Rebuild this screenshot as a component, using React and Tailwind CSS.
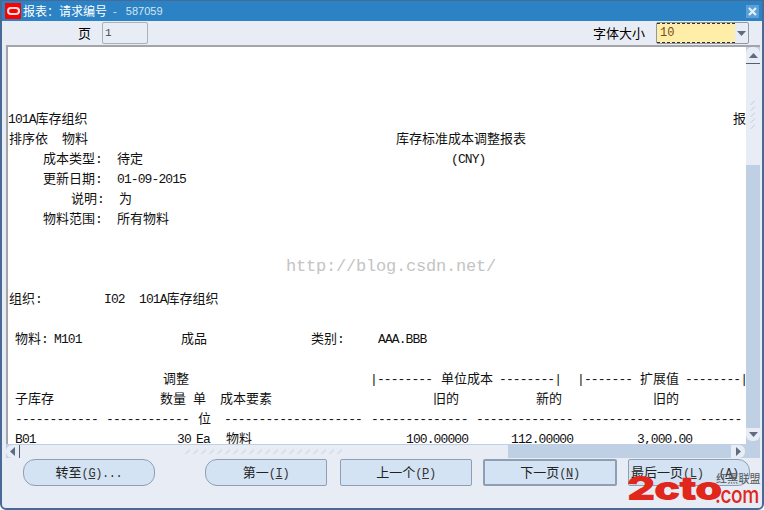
const CJK = '"Liberation Mono","Noto Sans CJK SC",monospace';
const NOTO = '"Noto Sans CJK SC",sans-serif';

function Row({ children }) {
  return <div className="flex h-5 items-center whitespace-pre shrink-0">{children}</div>;
}

function S({ className = "", children }) {
  return <span className={"shrink-0 block " + className}>{children}</span>;
}

function L({ className = "", children }) {
  return <span className={"text-[13px] tracking-[-0.9px] " + className}>{children}</span>;
}

function Btn({ className = "", children }) {
  return (
    <div className={"h-[27px] flex items-center justify-center border border-[#8f9fb3] bg-[#d3e3f3] text-[13px] text-[#222] shrink-0 whitespace-pre " + className} style={{ fontFamily: NOTO }}>
      {children}
    </div>
  );
}

function Mono({ children }) {
  return <span className="text-[12px] tracking-[-0.4px] text-[#333]" style={{ fontFamily: '"Liberation Mono",monospace' }}>{children}</span>;
}

function Grip({ vertical }) {
  const dots = [];
  for (let i = 0; i < (vertical ? 5 : 20); i++) dots.push(i);
  return (
    <div className={vertical ? "flex flex-col gap-[1px]" : "flex gap-[2px]"}>
      {dots.map((i) => (
        <svg key={i} width="6" height="5" viewBox="0 0 6 5">
          <path d="M1 4.5 L5 0.5" stroke="#a9b6c8" strokeWidth="1" strokeDasharray="1.5 1" fill="none" />
        </svg>
      ))}
    </div>
  );
}

export default function App() {
  return (
    <div className="w-[764px] h-[510px] overflow-hidden relative flex flex-col bg-[#e8edf5] border-x-2 border-b-2 border-t border-[#4a6a96] rounded-b-[6px] text-[12px] text-black" style={{ fontFamily: CJK }}>
      <div className="h-5 bg-[#2b82c4] flex items-center shrink-0 text-white text-[12px] whitespace-pre">
        <div className="w-[16px] h-[16px] bg-[#ff0000] flex items-center justify-center ml-[3px]">
          <div className="w-[13px] h-[8px] rounded-full border-2 border-[#ffe0e0]"></div>
        </div>
        <span className="ml-[2px]" style={{ fontFamily: NOTO }}>{"报表\uFF1A请求编号"}</span>
        <span className="ml-[6px] text-[#d5e6f5] text-[11px]" style={{ fontFamily: '"Liberation Sans",sans-serif' }}>-   587059</span>
        <div className="ml-auto mr-[3px] w-[13px] h-[13px] bg-[#5a9fd6] flex items-center justify-center">
          <svg width="11" height="11" viewBox="0 0 11 11">
            <path d="M2 2 L9 9 M9 2 L2 9" stroke="#e6f0fa" strokeWidth="2.2" />
          </svg>
        </div>
      </div>

      <div className="h-[24px] flex items-center shrink-0">
        <span className="ml-[76px] text-[13px]" style={{ fontFamily: NOTO }}>页</span>
        <div className="ml-[11px] w-[46px] h-[22px] rounded-[2px] border border-[#a9b1bd] bg-[#e8edf5] flex items-center px-[2px] text-[11px] text-[#444]" style={{ fontFamily: '"Liberation Mono",monospace' }}>1</div>
        <span className="ml-auto text-[13px]" style={{ fontFamily: NOTO }}>字体大小</span>
        <div className="ml-[11px] mr-[13px] w-[93px] h-[22px] rounded-[2px] border border-[#8f98a5] flex bg-[#e8edf5]">
          <div className="w-[78px] bg-[#ffeea8] border-y border-dashed border-[#333] flex items-center px-[3px] text-[12px] text-[#7a4a20]" style={{ fontFamily: '"Liberation Mono",monospace' }}>10</div>
          <div className="flex-1 flex items-center justify-center">
            <svg width="9" height="5" viewBox="0 0 9 5"><path d="M0 0 H9 L4.5 5 Z" fill="#5f6b80" /></svg>
          </div>
        </div>
      </div>

      <div className="flex-1 min-h-0 flex flex-col ml-[4px] mr-[2px] border-t-2 border-[#a3a5a8]">
        <div className="flex-1 min-h-0 flex border-l-2 border-[#a3a5a8]">
          <div className="flex-1 min-w-0 bg-white overflow-hidden relative pt-[62px] flex flex-col text-[13px] leading-none text-[#111]" style={{ fontFamily: CJK }}>
            <Row><S className="ml-[0px] w-[725px]"><L>101A</L>库存组织</S><S>报</S></Row>
            <Row><S className="ml-[1px] w-[53px]">排序依</S><S className="w-[334px]">物料</S><S>库存标准成本调整报表</S></Row>
            <Row><S className="ml-[35px] w-[74px]">成本类型:</S><S className="w-[334px]">待定</S><S><L>(CNY)</L></S></Row>
            <Row><S className="ml-[35px] w-[74px]">更新日期:</S><S><L>01-09-2015</L></S></Row>
            <Row><S className="ml-[63px] w-[48px]">说明:</S><S>为</S></Row>
            <Row><S className="ml-[35px] w-[74px]">物料范围:</S><S>所有物料</S></Row>
            <Row></Row>
            <Row></Row>
            <Row></Row>
            <Row><S className="ml-[1px] w-[95px]">组织:</S><S className="w-[35px]"><L>I02</L></S><S><L>101A</L>库存组织</S></Row>
            <Row></Row>
            <Row><S className="ml-[7px] w-[39px]">物料:</S><S className="w-[127px]"><L>M101</L></S><S className="w-[130px]">成品</S><S className="w-[67px]">类别:</S><S><L>AAA.BBB</L></S></Row>
            <Row></Row>
            <Row><S className="ml-[155px] w-[207px]">调整</S><S className="w-[71px]"><L>|--------</L></S><S className="w-[58px]">单位成本</S><S className="w-[78px]"><L>--------|</L></S><S className="w-[63px]"><L>|-------</L></S><S className="w-[45px]">扩展值</S><S><L>--------|</L></S></Row>
            <Row><S className="ml-[7px] w-[145px]">子库存</S><S className="w-[33px]">数量</S><S className="w-[27px]">单</S><S className="w-[213px]">成本要素</S><S className="w-[103px]">旧的</S><S className="w-[117px]">新的</S><S>旧的</S></Row>
            <Row><S className="ml-[7px] w-[91px]"><L>------------</L></S><S className="w-[92px]"><L>------------</L></S><S className="w-[26px]">位</S><S className="w-[147px]"><L>--------------------</L></S><S className="w-[105px]"><L>--------------</L></S><S className="w-[105px]"><L>--------------</L></S><S className="w-[119px]"><L>----------------</L></S><S><L>------</L></S></Row>
            <Row><S className="ml-[7px] w-[162px]"><L>B01</L></S><S className="w-[19px]"><L>30</L></S><S className="w-[30px]"><L>Ea</L></S><S className="w-[180px]">物料</S><S className="w-[105px]"><L>100.00000</L></S><S className="w-[126px]"><L>112.00000</L></S><S><L>3,000.00</L></S></Row>

            <div className="absolute left-[278px] top-[211px] text-[17px] tracking-[-0.2px] text-[#c4c4c4]" style={{ fontFamily: '"Liberation Mono",monospace' }}>http://blog.csdn.net/</div>
          </div>

          <div className="w-[14px] bg-[#bfcfe4] flex flex-col shrink-0">
            <div className="h-[17px] bg-[#e8edf5] rounded-t-[6px] border-b border-[#555f70] flex items-center justify-center">
              <svg width="9" height="5" viewBox="0 0 9 5"><path d="M4.5 0 L9 5 H0 Z" fill="#5f6b80" /></svg>
            </div>
            <div className="h-[101px] bg-[#e8edf5] flex flex-col justify-center items-center">
              <Grip vertical />
            </div>
            <div className="flex-1"></div>
            <div className="h-[13px] mb-[3px] bg-[#e8edf5] rounded-b-[6px] flex items-center justify-center">
              <svg width="9" height="5" viewBox="0 0 9 5"><path d="M0 0 H9 L4.5 5 Z" fill="#5f6b80" /></svg>
            </div>
          </div>
        </div>

        <div className="h-[14px] flex bg-[#bfcfe4] border-t border-[#bfcfe4] shrink-0">
          <div className="w-[14px] bg-[#e8edf5] rounded-l-[6px] border-r border-[#555f70] flex items-center justify-center">
            <svg width="5" height="9" viewBox="0 0 5 9"><path d="M0 4.5 L5 0 V9 Z" fill="#5f6b80" /></svg>
          </div>
          <div className="w-[488px] bg-[#e8edf5] flex items-center justify-center overflow-hidden">
            <Grip />
          </div>
          <div className="flex-1"></div>
          <div className="w-[14px] mr-[15px] bg-[#e8edf5] rounded-r-[6px] flex items-center justify-center">
            <svg width="5" height="9" viewBox="0 0 5 9"><path d="M5 4.5 L0 0 V9 Z" fill="#5f6b80" /></svg>
          </div>
        </div>

        <div className="h-[50px] flex pt-[1px] shrink-0">
          <Btn className="ml-[17px] w-[132px] rounded-[12px]"><span>转至<Mono>(<u>G</u>)...</Mono></span></Btn>
          <Btn className="ml-[50px] w-[122px] rounded-l-[12px] rounded-r-[2px]"><span>第一<Mono>(<u>I</u>)</Mono></span></Btn>
          <Btn className="ml-[13px] w-[132px] rounded-[2px]"><span>上一个<Mono>(<u>P</u>)</Mono></span></Btn>
          <Btn className="ml-[11px] w-[134px] rounded-[2px] border-2 border-[#4d6a8f]"><span>下一页<Mono>(<u>N</u>)</Mono></span></Btn>
          <Btn className="ml-[11px] w-[122px] rounded-r-[12px] rounded-l-[2px] justify-start pl-[2px]"><span>最后一页<Mono>(<u>L</u>)</Mono></span><span className="ml-[15px]"><Mono>(<u>A</u>)</Mono></span></Btn>
        </div>
      </div>

      <div className="absolute left-[714px] top-[472px] whitespace-nowrap text-[11px] tracking-[0.2px] leading-none text-[#555] pointer-events-none" style={{ fontFamily: NOTO }}>红黑联盟</div>
      <div className="absolute left-[625px] top-[471px] origin-left scale-x-[1.33] text-[33px] font-black text-[#e1261c] leading-none tracking-[-1px] pointer-events-none" style={{ fontFamily: '"Inter",sans-serif' }}>2cto</div>
      <div className="absolute left-[713px] top-[482px] origin-left scale-x-[0.8] text-[24px] font-medium text-[#e1261c] leading-none tracking-[-0.5px] pointer-events-none" style={{ fontFamily: '"Inter",sans-serif' }}>.com</div>
    </div>
  );
}
